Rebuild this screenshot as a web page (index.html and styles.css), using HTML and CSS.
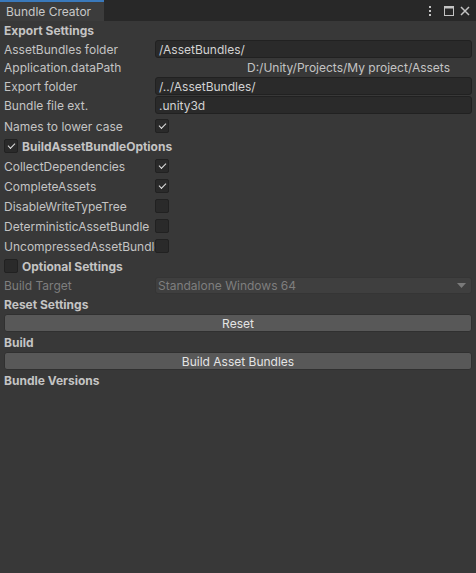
FILE: index.html
```html
<!DOCTYPE html>
<html>
<head>
<meta charset="utf-8">
<link rel="stylesheet" href="styles.css">
</head>
<body>
<div class="window">
  <div class="tabbar">
    <div class="tab">Bundle Creator</div>
    <div class="tab-icons">
      <svg class="kebab" width="4" height="12" viewBox="0 0 4 12"><rect x="1" y="1" width="2" height="2" fill="#c4c4c4"/><rect x="1" y="5" width="2" height="2" fill="#c4c4c4"/><rect x="1" y="9" width="2" height="2" fill="#c4c4c4"/></svg>
      <svg class="max" width="10" height="10" viewBox="0 0 10 10"><rect x="0.5" y="0.5" width="9" height="9" fill="none" stroke="#c4c4c4"/><rect x="0.5" y="0.5" width="9" height="2" fill="#c4c4c4"/></svg>
      <svg class="close" width="10" height="10" viewBox="0 0 10 10"><path d="M1 1 L9 9 M9 1 L1 9" stroke="#c4c4c4" stroke-width="1.5"/></svg>
    </div>
  </div>
  <div class="content">
    <div class="row header">Export Settings</div>
    <div class="row"><span class="label">AssetBundles folder</span><span class="field">/AssetBundles/</span></div>
    <div class="row tight"><span class="label">Application.dataPath</span><span class="value path">D:/Unity/Projects/My project/Assets</span></div>
    <div class="row"><span class="label">Export folder</span><span class="field">/../AssetBundles/</span></div>
    <div class="row"><span class="label">Bundle file ext.</span><span class="field">.unity3d</span></div>
    <div class="row toggle first"><span class="label">Names to lower case</span><span class="check on"></span></div>
    <div class="row toggle header foldcheck"><span class="check on"></span><span>BuildAssetBundleOptions</span></div>
    <div class="row toggle"><span class="label">CollectDependencies</span><span class="check on"></span></div>
    <div class="row toggle"><span class="label">CompleteAssets</span><span class="check on"></span></div>
    <div class="row toggle"><span class="label">DisableWriteTypeTree</span><span class="check"></span></div>
    <div class="row toggle"><span class="label">DeterministicAssetBundle</span><span class="check"></span></div>
    <div class="row toggle"><span class="label">UncompressedAssetBundle</span><span class="check"></span></div>
    <div class="row toggle header foldcheck"><span class="check"></span><span>Optional Settings</span></div>
    <div class="row disabled"><span class="label">Build Target</span><span class="dropdown"><span>Standalone Windows 64</span><svg width="9" height="5" viewBox="0 0 9 5"><path d="M0 0 L9 0 L4.5 5 Z" fill="#7a7a7a"/></svg></span></div>
    <div class="row header">Reset Settings</div>
    <div class="row"><span class="button">Reset</span></div>
    <div class="row header">Build</div>
    <div class="row"><span class="button">Build Asset Bundles</span></div>
    <div class="row header">Bundle Versions</div>
  </div>
</div>
</body>
</html>
```

FILE: styles.css
```css
html, body {
  margin: 0;
  padding: 0;
  background: #383838;
}
body {
  font-family: Inter, "Noto Sans", sans-serif;
  font-size: 12px;
  color: #c4c4c4;
  width: 476px;
  height: 573px;
  overflow: hidden;
}
.window {
  display: flex;
  flex-direction: column;
  height: 573px;
}
.tabbar {
  height: 21px;
  background: #282828;
  display: flex;
  align-items: stretch;
  justify-content: space-between;
}
.tab {
  width: 104px;
  padding-left: 6px;
  background: #3c3c3c;
  border-top: 2px solid #3a79bb;
  box-sizing: border-box;
  display: flex;
  align-items: center;
  font-size: 12px;
  color: #c8c8c8;
}
.tab-icons {
  display: flex;
  align-items: center;
  padding-right: 6px;
}
.tab-icons .max { margin-left: 12px; }
.tab-icons .close { margin-left: 6px; }
.content {
  display: flex;
  flex-direction: column;
  gap: 1px;
  padding: 0 4px;
}
.row {
  height: 18px;
  display: flex;
  align-items: center;
  white-space: nowrap;
}
.row.tight { margin-top: -1px; }
.row.toggle { margin-top: 1px; }
.row.toggle.first { margin-top: 2px; }
.header { font-weight: 700; }
.label {
  width: 151px;
  flex: none;
  overflow: hidden;
}
.field {
  flex: 1;
  height: 18px;
  box-sizing: border-box;
  background: #2a2a2a;
  border: 1px solid #212121;
  border-radius: 3px;
  padding-left: 3px;
  display: flex;
  align-items: center;
  color: #d2d2d2;
}
.value.path {
  padding-left: 92px;
}
.check {
  width: 14px;
  height: 14px;
  box-sizing: border-box;
  background: #2a2a2a;
  border: 1px solid #212121;
  border-radius: 2px;
  flex: none;
  position: relative;
}
.check.on::after {
  content: "";
  position: absolute;
  left: 3px;
  top: 3px;
  width: 6px;
  height: 3px;
  border-left: 1.6px solid #e0e0e0;
  border-bottom: 1.6px solid #e0e0e0;
  transform: rotate(-45deg);
  transform-origin: center;
}
.foldcheck { gap: 4px; }
.disabled .label { color: #7e7e7e; }
.dropdown {
  flex: 1;
  height: 17px;
  box-sizing: border-box;
  background: #3f3f3f;
  border: 1px solid #353535;
  border-radius: 3px;
  padding: 0 5px 0 2px;
  display: flex;
  align-items: center;
  justify-content: space-between;
  color: #7e7e7e;
}
.button {
  flex: 1;
  height: 18px;
  box-sizing: border-box;
  background: #585858;
  border: 1px solid #303030;
  border-radius: 3px;
  display: flex;
  align-items: center;
  justify-content: center;
  color: #e4e4e4;
}
```
